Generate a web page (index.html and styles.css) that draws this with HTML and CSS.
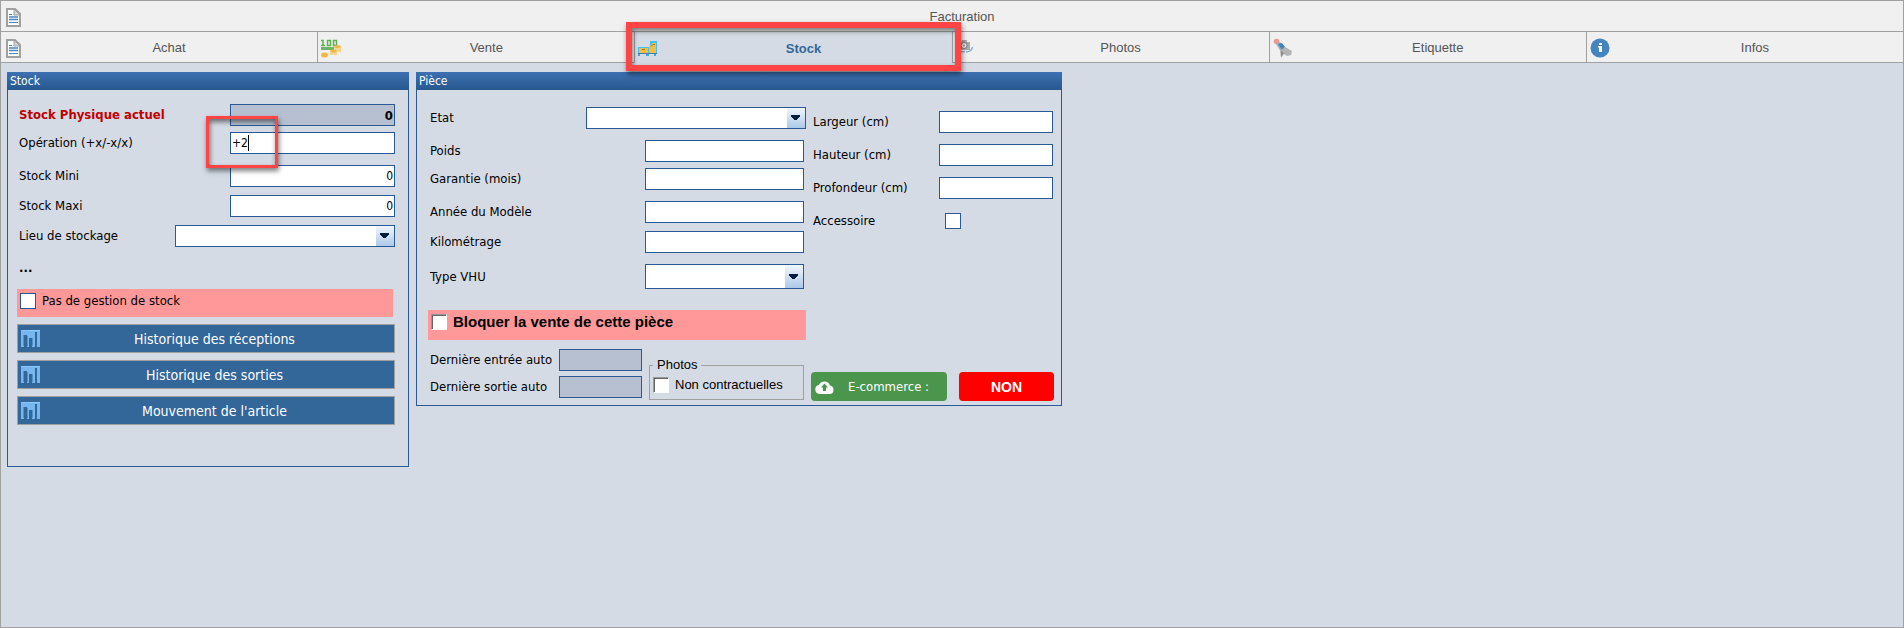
FILE: index.html
```html
<!DOCTYPE html>
<html lang="fr">
<head>
<meta charset="utf-8">
<title>Article - Stock</title>
<link rel="stylesheet" href="styles.css">
</head>
<body>
<svg class="defs" aria-hidden="true">
  <symbol id="i-doc" viewBox="0 0 15 19">
    <path d="M1 1h8l5 5v12H1z" fill="#fff" stroke="#a0a0a0" stroke-width="2"/>
    <path d="M8 1v6h6z" fill="#d4d4d4" stroke="#a0a0a0"/>
    <path d="M3 6.500h3M3 14.500h9" stroke="#4a87bf" stroke-width="1"/>
    <path d="M3 9h9M3 11.500h9" stroke="#4a87bf" stroke-width="1.500"/>
  </symbol>
  <symbol id="i-chart" viewBox="0 0 19 17">
    <path d="M0 0h19v17H0z" fill="#78b6ee"/>
    <path d="M0 0h19v1H0z" fill="#8cc8ff"/>
    <path d="M3 5h3v12H3zM8 8h3v9H8zM14 2h2v15h-2z" fill="#336699"/>
    <path d="M6 6h1v10H6zM11 8h1v8h-1zM2 5h1v11H2z" fill="#5690c8"/>
  </symbol>
</svg>
<div class="app">
  <nav class="tabs">
    <button class="tab" type="button"><svg class="icon icon-doc"><use href="#i-doc"/></svg><span>Facturation</span></button>
  </nav>
  <nav class="tabs">
    <button class="tab" type="button"><svg class="icon icon-doc"><use href="#i-doc"/></svg><span>Achat</span></button>
    <button class="tab" type="button">
      <svg class="icon" viewBox="0 0 20 20">
        <path d="M0 2.500h2v5M0 7.500h4M6.500 2.500h3v5h-3zM12.500 2.500h3v5h-3z" fill="none" stroke="#5cb050" stroke-width="1.500"/>
        <path d="M0 9h14v3H0z" fill="#6db566"/>
        <path d="M13 8h7v6h-4v3H9v-5h4z" fill="#f8d58c"/>
        <ellipse cx="16.500" cy="8.500" rx="3" ry="1.500" fill="#f0b848"/>
        <ellipse cx="12.500" cy="13" rx="3" ry="1.500" fill="#f0b848"/>
        <ellipse cx="3.500" cy="17" rx="3.500" ry="2.500" fill="#f3b93f"/>
      </svg><span>Vente</span></button>
    <button class="tab tab-active" type="button">
      <svg class="icon" viewBox="0 0 20 20">
        <path d="M12 2h7v12H0V8h12z" fill="#3fc2f7"/>
        <path d="M1 9h9v5H1zM11 7l3-1V4h4v10h-7z" fill="#f6bb42"/>
        <path d="M4 10.500h3M13 7.500l2-2h2" fill="none" stroke="#a97a1e"/>
        <path d="M0 14h19v1H0z" fill="#3d7fa8"/>
        <path d="M0 15h2v2H0zM8 15h3v2H8zM16 15h2v2h-2z" fill="#43a5d0"/>
      </svg><span>Stock</span><i class="callout callout-tab"></i></button>
    <button class="tab" type="button">
      <svg class="icon" viewBox="0 0 20 20">
        <path d="M1 4h4l1-2h5v2h3v8H1z" fill="#a9a9a9"/>
        <circle cx="8" cy="7.500" r="3" fill="#eee" stroke="#777"/><circle cx="8" cy="7.500" r="1" fill="#888"/>
        <path d="M2 12q3 2.500 7 1.500M10 14q6-.5 6.500-5" fill="none" stroke="#85aacb" stroke-width="1.500"/>
      </svg><span>Photos</span></button>
    <button class="tab" type="button">
      <svg class="icon" viewBox="0 0 20 20">
        <circle cx="3.500" cy="3.500" r="2.800" fill="#ee9a92"/>
        <path d="M3 6l4-2 5 6-4 4z" fill="#a5adb5"/>
        <path d="M5 6l4-1 3 4-3 3z" fill="#3f83c0"/>
        <path d="M7 13l5-4 7 4-1 4-4 1-3-2-3 4z" fill="#b4b4b4"/>
        <path d="M8 13v6l3-4z" fill="#8c8c8c"/>
      </svg><span>Etiquette</span></button>
    <button class="tab" type="button">
      <svg class="icon" viewBox="0 0 20 20">
        <circle cx="10" cy="10" r="9.500" fill="#4585bf"/>
        <path d="M9 5h3v2H9zM8 8h4v6H9V9.500H8z" fill="#fff"/>
      </svg><span>Infos</span></button>
  </nav>

  <main class="content">
    <section class="panel panel-stock">
      <h2 class="panel-title">Stock</h2>
      <div class="stock-body">
        <div class="row"><label class="strong-red" for="phys">Stock Physique actuel</label><input class="field field-stock readonly num bold" id="phys" value="0" readonly></div>
        <div class="row gap-s"><label for="op">Opération (+x/-x/x)</label>
          <span class="op"><input class="field field-stock" id="op" value="+2"><i class="caret"></i><i class="callout callout-op"></i></span></div>
        <div class="row gap-l"><label for="mini">Stock Mini</label><input class="field field-stock num" id="mini" value="0"></div>
        <div class="row gap-m"><label for="maxi">Stock Maxi</label><input class="field field-stock num" id="maxi" value="0"></div>
        <div class="row gap-m"><label for="lieu">Lieu de stockage</label><select class="field select field-wide" id="lieu"><option></option></select></div>
        <p class="dots">...</p>
        <label class="band band-stock"><input class="check" type="checkbox"><span>Pas de gestion de stock</span></label>
        <div class="actions">
          <button class="action" type="button"><svg class="icon-chart"><use href="#i-chart"/></svg><span>Historique des réceptions</span></button>
          <button class="action" type="button"><svg class="icon-chart"><use href="#i-chart"/></svg><span>Historique des sorties</span></button>
          <button class="action" type="button"><svg class="icon-chart"><use href="#i-chart"/></svg><span>Mouvement de l'article</span></button>
        </div>
      </div>
    </section>

    <section class="panel panel-piece">
      <h2 class="panel-title">Pièce</h2>
      <div class="piece-body">
        <div class="piece-left">
          <div class="row row-full"><label for="etat">Etat</label><select class="field select field-wide" id="etat"><option></option></select></div>
          <div class="row gap-l"><label for="poids">Poids</label><input class="field field-piece" id="poids"></div>
          <div class="row gap-s"><label for="gar">Garantie (mois)</label><input class="field field-piece" id="gar"></div>
          <div class="row gap-l"><label for="annee">Année du Modèle</label><input class="field field-piece" id="annee"></div>
          <div class="row gap-m"><label for="km">Kilométrage</label><input class="field field-piece" id="km"></div>
          <div class="row gap-l"><label for="vhu">Type VHU</label><select class="field select field-piece tall" id="vhu"><option></option></select></div>
          <label class="band band-piece"><input class="check sunken" type="checkbox"><span>Bloquer la vente de cette pièce</span></label>
        </div>
        <div class="piece-right">
          <div class="row"><label for="larg">Largeur (cm)</label><input class="field field-dim" id="larg"></div>
          <div class="row gap-l"><label for="haut">Hauteur (cm)</label><input class="field field-dim" id="haut"></div>
          <div class="row gap-l"><label for="prof">Profondeur (cm)</label><input class="field field-dim" id="prof"></div>
          <div class="row gap-l"><label for="acc">Accessoire</label><span class="field-dim check-cell"><input class="check" type="checkbox" id="acc"></span></div>
        </div>
      </div>
      <div class="piece-foot">
        <div class="dates">
          <div class="row"><label for="ent">Dernière entrée auto</label><input class="field field-date readonly" id="ent" readonly></div>
          <div class="row"><label for="sor">Dernière sortie auto</label><input class="field field-date readonly" id="sor" readonly></div>
        </div>
        <fieldset class="photos">
          <legend>Photos</legend>
          <label class="photos-label"><input class="check sunken" type="checkbox"><span>Non contractuelles</span></label>
        </fieldset>
        <button class="btn btn-shop" type="button">
          <svg class="icon-cloud" viewBox="0 0 19 14"><path d="M4.500 14a4.500 4.500 0 0 1-.6-8.900A6 6 0 0 1 15 5.500 4.300 4.300 0 0 1 14.700 14z" fill="#fff"/><path d="M9.500 3.500l3.500 4h-2v3.500H8V7.500H6z" fill="#4b954c"/></svg>
          <span>E-commerce :</span></button>
        <button class="btn btn-no" type="button">NON</button>
      </div>
    </section>
  </main>
</div>
</body>
</html>
```

FILE: styles.css
```css
* { box-sizing: border-box; }

body {
  margin: 0;
  background: #d5dbe4;
  color: #000;
  font: 13px/16px "DejaVu Sans Condensed", "Noto Sans", sans-serif;
}

button, input, select { font: inherit; color: inherit; margin: 0; }
.defs { position: absolute; width: 0; height: 0; }

.app {
  min-height: 100vh;
  border: 1px solid #a0a0a0;
}

/* Tabs */
.tabs { display: flex; height: 31px; border-bottom: 1px solid #a0a0a0; }
.tab {
  position: relative;
  flex: 1 1 0;
  display: flex;
  align-items: center;
  padding: 2px 3px 0;
  border: 0;
  border-left: 1px solid #a0a0a0;
  background: #f0f0f0;
  color: #555;
  font: 13px/16px "Liberation Sans", Arial, sans-serif;
}
.tab:first-child { border-left-color: #f0f0f0; padding-left: 2px; }
.tab > span { flex: 1; text-align: center; }
.tab-active {
  background: #d5dbe4;
  color: #336699;
  font-weight: bold;
  margin-bottom: -1px;
}
.icon { width: 20px; height: 20px; flex: none; }
.icon-doc { width: 15px; height: 19px; margin: 0 3px 0 2px; }

/* Highlight frames */
.callout {
  position: absolute;
  z-index: 2;
  border: 6px solid #fe4444;
  box-shadow: 1px 3px 5px rgba(0, 0, 0, .5), inset 1px 3px 5px rgba(0, 0, 0, .5);
  pointer-events: none;
}
.callout-tab { inset: -10px -9px -8px -9px; }
.callout-op { left: -24px; top: -16px; width: 72px; height: 52px; border-width: 3px; }

/* Panels */
.content { display: flex; align-items: flex-start; gap: 7px; padding: 9px 6px; }
.panel { border: 1px solid #2a5a95; border-top: 0; }
.panel-stock { width: 402px; padding-bottom: 41px; }
.panel-piece { width: 646px; padding-bottom: 4px; }
.panel-title {
  margin: 0 -1px;
  padding: 1px 3px;
  height: 18px;
  background: linear-gradient(#3d70b2, #28588e);
  color: #fff;
  font-size: 12px;
  line-height: 16px;
  font-weight: normal;
}

.row {
  display: flex;
  align-items: center;
  justify-content: space-between;
  min-height: 22px;
  padding-left: 2px;
}
.gap-s { margin-top: 6px; }
.gap-m { margin-top: 8px; }
.gap-l { margin-top: 11px; }

.field {
  width: 165px;
  height: 22px;
  padding: 0 1px;
  border: 1px solid #2a5a95;
  border-radius: 0;
  background-color: #fff;
  font-size: 12px;
  outline: 0;
}
.field-wide { width: 220px; }
.field-piece { width: 159px; }
.field-dim { width: 114px; }
.field-date { width: 83px; }
.tall { height: 25px; }
.readonly { background-color: #b7c0d0; }
.num { text-align: right; }
.bold { font-weight: bold; font-size: 13px; }
.strong-red { color: #c00000; font-weight: bold; }

.select {
  appearance: none;
  background-image: linear-gradient(#001f3f, #001f3f), linear-gradient(#001f3f, #001f3f), linear-gradient(#001f3f, #001f3f), linear-gradient(#001f3f, #001f3f), linear-gradient(#001f3f, #001f3f), linear-gradient(#f0f6fc, #adc9e8);
  background-repeat: no-repeat;
  background-size: 9px 1px, 9px 1px, 7px 1px, 5px 1px, 3px 1px, 18px 100%;
  background-position: right 5px top 7px, right 5px top 8px, right 6px top 9px, right 7px top 10px, right 8px top 11px, right top;
}
.tall { background-position: right 5px top 9px, right 5px top 10px, right 6px top 11px, right 7px top 12px, right 8px top 13px, right top; }

.op { position: relative; display: flex; }
.caret { position: absolute; left: 18px; top: 3px; width: 1px; height: 16px; background: #000; }

.check {
  appearance: none;
  flex: none;
  width: 16px;
  height: 16px;
  border: 1px solid #2a5a95;
  background: #fff;
}
.sunken {
  border: 1px solid #fff;
  border-color: #999 #fff #fff #999;
  box-shadow: inset 1px 1px #666;
}
.check-cell { padding-left: 6px; display: flex; }

.band { display: flex; align-items: flex-start; background: #ff9999; }

/* Stock panel */
.stock-body { padding: 14px 13px 0 9px; }
.dots { margin: 13px 2px; font-weight: bold; }
.band-stock { height: 28px; margin-right: 2px; padding: 4px 3px; gap: 6px; }
.actions { display: flex; flex-direction: column; gap: 7px; margin-top: 7px; }
.action {
  display: flex;
  align-items: center;
  height: 29px;
  padding: 0 3px;
  border: 1px solid #a0a0a0;
  background: #336699;
  color: #fff;
  font-size: 14px;
}
.action span { flex: 1; padding-right: 2px; text-align: center; }
.icon-chart { width: 19px; height: 17px; flex: none; }

/* Part panel */
.piece-body { display: flex; gap: 5px; padding: 17px 8px 0 11px; }
.piece-left { width: 378px; }
.piece-left .row { padding-right: 2px; }
.piece-left .row-full { padding-right: 0; }
.piece-right { flex: 1; padding-top: 4px; }
.band-piece {
  height: 30px;
  margin-top: 21px;
  padding: 4px 3px;
  gap: 6px;
  font: bold 15px/16px "Liberation Sans", Arial, sans-serif;
}
.piece-foot { display: flex; align-items: flex-end; padding: 9px 7px 0 11px; }
.dates {
  display: flex;
  flex-direction: column;
  gap: 5px;
  width: 214px;
  padding-bottom: 3px;
}
.photos {
  width: 155px;
  margin: 0 7px 1px;
  padding: 0 3px 6px;
  border: 1px solid #a0a0a0;
  font: 13px/16px "Liberation Sans", Arial, sans-serif;
}
.photos legend { padding: 0 4px; }
.photos-label { display: flex; align-items: center; gap: 6px; padding-top: 4px; }
.btn {
  display: flex;
  align-items: center;
  justify-content: center;
  height: 29px;
  border: 0;
  border-radius: 4px;
  color: #fff;
}
.btn-shop { width: 136px; padding: 0 4px; background: #4b954c; }
.btn-shop span { flex: 1; text-align: center; }
.icon-cloud { width: 19px; height: 14px; flex: none; }
.btn-no {
  width: 95px;
  margin-left: 12px;
  background: #ff0000;
  font: bold 14px/16px "Liberation Sans", Arial, sans-serif;
}
```
